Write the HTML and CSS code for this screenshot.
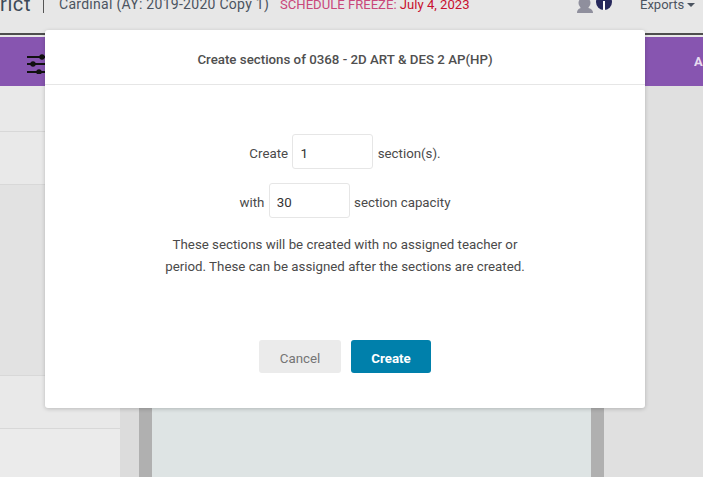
FILE: index.html
```html
<!DOCTYPE html>
<html lang="en">
<head>
  <meta charset="UTF-8" />
  <title>Create sections</title>
  <link rel="stylesheet" href="styles.css">
</head>
<body>
  <div class="topbar">
    <span class="district">rict</span>
    <span class="divider"></span>
    <span class="school">Cardinal (AY: 2019-2020 Copy 1)</span>
    <span class="freeze">SCHEDULE FREEZE: <b>July 4, 2023</b></span>
    <span class="spacer"></span>
    <span class="user">
      <svg width="36" height="24" viewBox="0 0 36 24">
        <circle cx="7.500" cy="3" r="6" fill="#8f8f9d"/>
        <path d="M0 13 C0 9 3 7.500 7.500 7.500 C12 7.500 16 9 16 13 Z" fill="#8f8f9d"/>
        <circle cx="27" cy="2" r="8" fill="#27295c"/>
        <rect x="26" y="1" width="2" height="9" fill="#fff"/>
      </svg>
    </span>
    <span class="exports">Exports <i class="caret"></i></span>
  </div>
  <div class="toolbar">
    <svg class="filters" width="20" height="20" viewBox="0 0 20 20">
      <path d="M0 3H20M0 10H20M0 18H20" stroke="#111" stroke-width="2"/>
      <circle cx="15" cy="3" r="2.700" fill="#111"/>
      <circle cx="6" cy="10" r="2.700" fill="#111"/>
      <circle cx="12" cy="18" r="2.700" fill="#111"/>
    </svg>
    <span class="toolbar-label">A</span>
  </div>
  <div class="content">
    <div class="side">
      <div class="side-row short"></div>
      <div class="side-row"></div>
      <div class="side-row dark"></div>
      <div class="side-row"></div>
      <div class="side-row last"></div>
    </div>
    <div class="gutter"></div>
    <div class="sheet"></div>
    <div class="right"></div>
  </div>

  <div class="modal">
    <div class="modal-head">Create sections of 0368 - 2D ART &amp; DES 2 AP(HP)</div>
    <div class="modal-body">
      <div class="line">Create <input class="num" value="1"> section(s).</div>
      <div class="line">with <input class="num" value="30"> section capacity</div>
      <p class="note">These sections will be created with no assigned teacher or<br>period. These can be assigned after the sections are created.</p>
    </div>
    <div class="modal-foot">
      <button class="btn cancel">Cancel</button>
      <button class="btn create">Create</button>
    </div>
  </div>
</body>
</html>
```

FILE: styles.css
```css
* {
  box-sizing: border-box;
  margin: 0;
  padding: 0;
}

html, body {
  height: 100%;
  overflow: hidden;
}

body {
  font-family: Roboto, sans-serif;
  background: #e7e7e7;
  color: #4a4a4a;
  font-size: 13.3px;
  position: relative;
}

.topbar {
  height: 35px;
  display: flex;
  align-items: flex-start;
  border-bottom: 2px solid #4d4d4d;
  overflow: hidden;
}

.topbar > span {
  line-height: 14px;
  margin-top: -3px;
}

.district {
  font-size: 20px;
  color: #3c4a58;
  letter-spacing: 0.6px;
  width: 29px;
}

.topbar > .divider {
  width: 1px;
  height: 16px;
  margin: -3px 15px 0 14px;
  background: #555;
}

.school {
  font-size: 14px;
  color: #4b5460;
  width: 221px;
  letter-spacing: 0.28px;
}

.topbar > .freeze {
  font-size: 13.1px;
  color: #c9487a;
  margin-top: -2px;
}

.freeze b {
  font-weight: 400;
  color: #c8102e;
}

.spacer {
  flex: 1;
}

.topbar > .user {
  margin: 0;
  height: 16px;
  width: 63px;
}

.user svg {
  display: block;
}

.topbar > .exports {
  font-size: 13px;
  color: #4b5460;
  width: 63px;
  margin-top: -2px;
}

.caret {
  display: inline-block;
  border: 4px solid transparent;
  border-top-color: #4b5460;
  border-bottom: 0;
  vertical-align: 2px;
}

.toolbar {
  margin-top: 2px;
  height: 49px;
  background: #8755b0;
  display: flex;
  align-items: center;
  justify-content: space-between;
  padding: 0 0 0 27px;
}

.filters {
  margin-top: 5px;
}

.toolbar-label {
  color: #e8dcf0;
  font-weight: 700;
  font-size: 13px;
  width: 9px;
  overflow: hidden;
}

.content {
  display: flex;
  height: 391px;
}

.side {
  width: 120px;
  display: flex;
  flex-direction: column;
}

.side-row {
  height: 53px;
  background: #e9e9e9;
  border-bottom: 1px solid #d8d8d8;
}

.side-row.short {
  height: 46px;
}

.side-row.dark {
  height: 191px;
  background: #e2e2e2;
}

.side-row.last {
  flex: 1;
  border: 0;
  background: #ebebeb;
}

.gutter {
  width: 19px;
  background: #dcdcdc;
}

.sheet {
  width: 465px;
  background: #dee4e4;
  border-left: 13px solid #b0b0b0;
  border-right: 13px solid #b0b0b0;
}

.right {
  flex: 1;
  background: #e0e0e0;
}

.modal {
  position: absolute;
  left: 45px;
  top: 30px;
  width: 600px;
  height: 378px;
  background: #fff;
  border-radius: 3px;
  box-shadow: 0 1px 4px rgba(0, 0, 0, 0.2);
}

.modal-head {
  height: 55px;
  line-height: 59px;
  text-align: center;
  font-weight: 500;
  font-size: 13.3px;
  color: #4f4f4f;
  border-bottom: 1px solid #e6e6e6;
}

.modal-body {
  padding-top: 49px;
  text-align: center;
}

.line {
  height: 35px;
  margin-bottom: 14px;
  line-height: 39px;
}

.num {
  width: 81px;
  height: 35px;
  margin: 0 1px;
  padding: 3px 7px 0;
  border: 1px solid #e6e6e6;
  border-radius: 3px;
  font-family: inherit;
  font-size: 13.3px;
  color: #333;
  vertical-align: top;
}

.note {
  margin-top: 16px;
  line-height: 22px;
}

.modal-foot {
  position: absolute;
  left: 214px;
  top: 310px;
  display: flex;
  gap: 10px;
}

.btn {
  height: 33px;
  padding-top: 3px;
  border: 0;
  border-radius: 3px;
  font-family: inherit;
  font-size: 13.3px;
}

.cancel {
  width: 82px;
  background: #ebebeb;
  color: #757575;
}

.create {
  width: 80px;
  background: #0080ab;
  color: #fff;
  font-weight: 700;
}
```
